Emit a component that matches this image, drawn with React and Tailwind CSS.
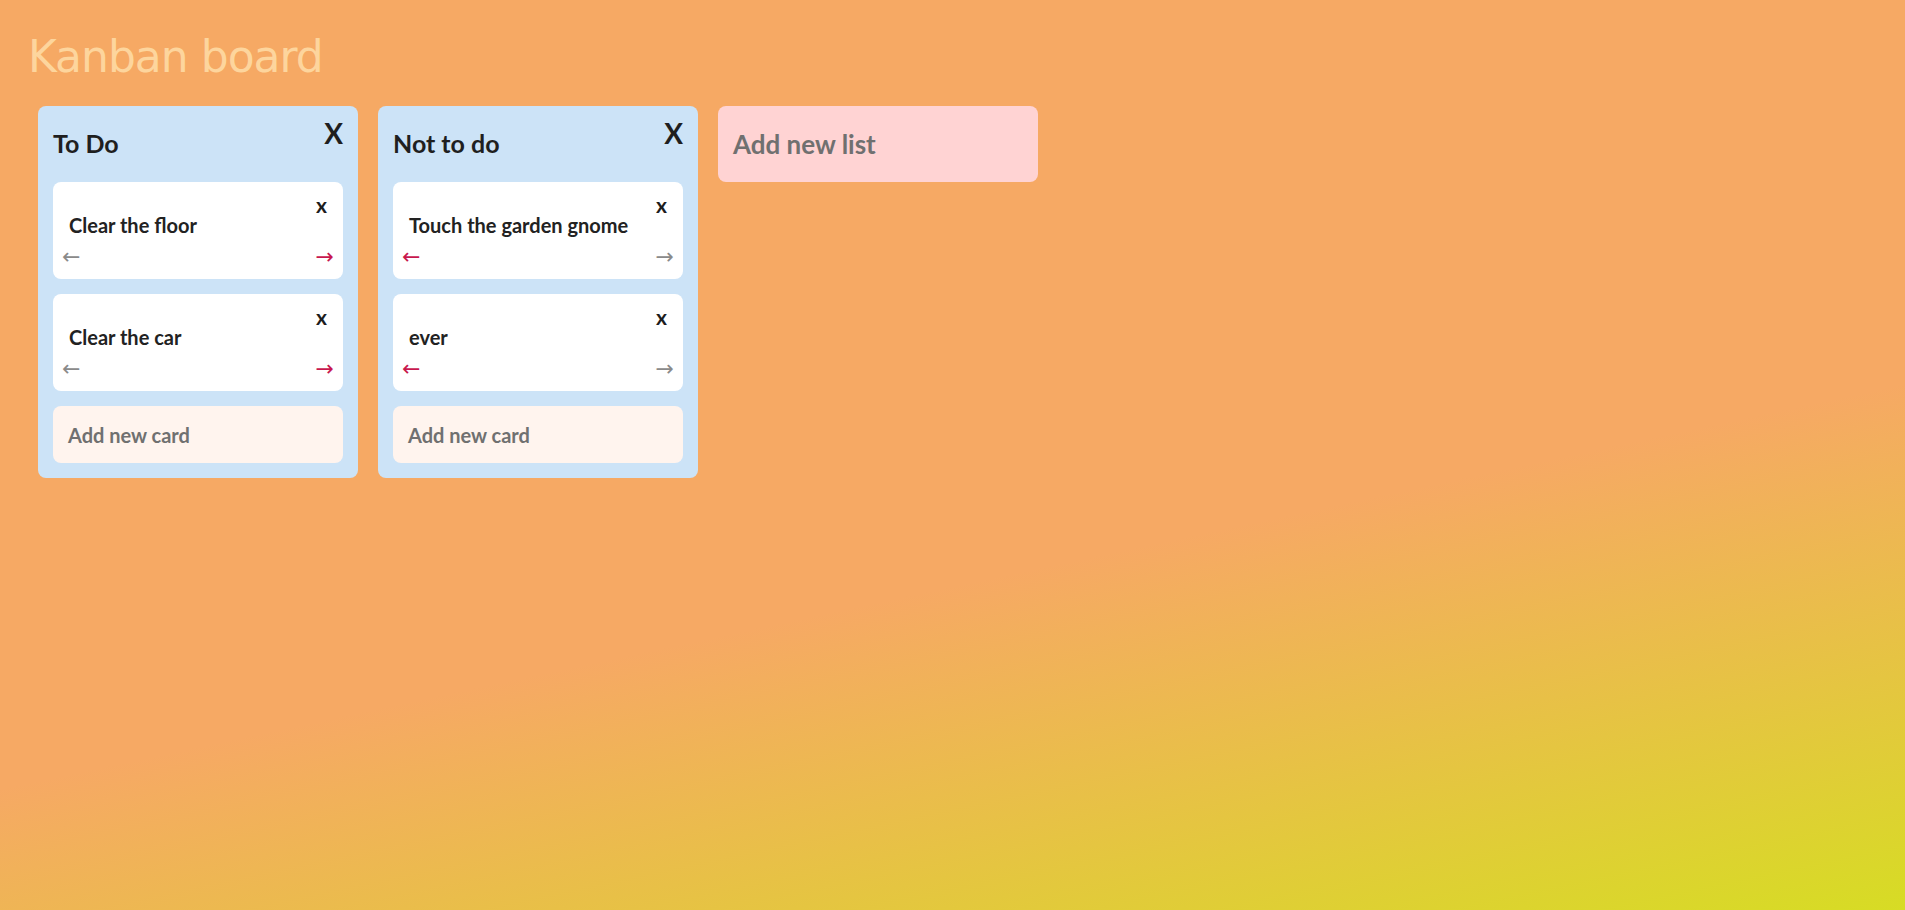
import { useState } from 'react'

const initialLists = [
  {
    id: 1,
    title: 'To Do',
    cards: [
      { id: 1, text: 'Clear the floor' },
      { id: 2, text: 'Clear the car' },
    ],
  },
  {
    id: 2,
    title: 'Not to do',
    cards: [
      { id: 3, text: 'Touch the garden gnome' },
      { id: 4, text: 'ever' },
    ],
  },
]

const sans = "font-['Lato','Noto_Sans',sans-serif]"

function Card({ card, canLeft, canRight }) {
  return (
    <div className="bg-white rounded-[8px] h-[97px] pt-[12px] px-[16px] flex flex-col mb-[15px]">
      <div className="flex justify-end">
        <button className="text-[21px] leading-none font-bold text-[#1c1c1c]">x</button>
      </div>
      <p className="text-[20px] leading-none font-bold text-[#222]">{card.text}</p>
      <div className="flex justify-between -mx-[7px] mt-[11px] font-['DejaVu_Sans',sans-serif] text-[22px] leading-none">
        <button className={canLeft ? 'text-[#c8174e]' : 'text-[#8a8a8a]'}>←</button>
        <button className={canRight ? 'text-[#c8174e]' : 'text-[#8a8a8a]'}>→</button>
      </div>
    </div>
  )
}

function List({ list, index, total }) {
  return (
    <div className="w-[320px] bg-[#cce3f7] rounded-[8px] px-[15px] pb-[15px]">
      <div className="h-[76px] flex justify-between items-start">
        <h2 className="mt-[25px] text-[25px] leading-none font-bold text-[#1f1f1f]">{list.title}</h2>
        <button className="mt-[13px] text-[28px] leading-none font-bold text-[#1f1f1f]">X</button>
      </div>
      {list.cards.map((card) => (
        <Card key={card.id} card={card} canLeft={index > 0} canRight={index < total - 1} />
      ))}
      <div className="h-[57px] bg-[#fff4ee] rounded-[8px] px-[15px] flex items-center">
        <span className="text-[20px] leading-none font-bold text-[#707070]">Add new card</span>
      </div>
    </div>
  )
}

export default function App() {
  const [lists] = useState(initialLists)

  return (
    <div className={`min-h-screen bg-[linear-gradient(168deg,#f6a964_60%,#d7dc24_100%)] ${sans}`}>
      <h1 className="pt-[35px] pl-[28px] font-['DejaVu_Sans',sans-serif] text-[44px] leading-none tracking-[-1px] text-[#fdd59d]">
        Kanban board
      </h1>
      <div className="flex items-start gap-[20px] pl-[38px] mt-[27px]">
        {lists.map((list, i) => (
          <List key={list.id} list={list} index={i} total={lists.length} />
        ))}
        <div className="w-[320px] h-[76px] bg-[#ffd3d3] rounded-[8px] px-[15px] flex items-center">
          <span className="text-[26px] leading-none font-bold text-[#707070]">Add new list</span>
        </div>
      </div>
    </div>
  )
}
